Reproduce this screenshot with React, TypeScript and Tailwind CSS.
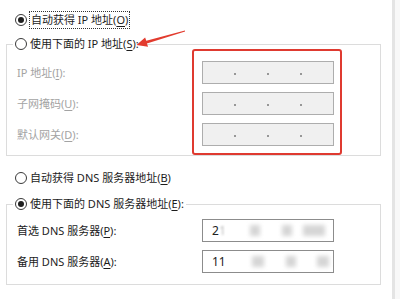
import type { ReactNode } from "react";

function Radio({ checked }: { checked?: boolean }) {
  return (
    <span className="flex h-[12px] w-[12px] shrink-0 items-center justify-center rounded-full border border-[#3a3a3a] bg-white">
      {checked && <span className="h-[6px] w-[6px] rounded-full bg-[#1f1f1f]" />}
    </span>
  );
}

function Key({ k }: { k: string }) {
  return <span className="underline underline-offset-[2px]">{k}</span>;
}

function IpBox() {
  return (
    <div className="flex h-[23px] w-[132px] items-center border border-[#adadad] bg-[#f0f0f0]">
      <span className="flex-1" />
      <span className="mt-[3px] h-[2px] w-[2px] rounded-full bg-[#7a7a7a]" />
      <span className="flex-1" />
      <span className="mt-[3px] h-[2px] w-[2px] rounded-full bg-[#7a7a7a]" />
      <span className="flex-1" />
      <span className="mt-[3px] h-[2px] w-[2px] rounded-full bg-[#7a7a7a]" />
      <span className="flex-1" />
    </div>
  );
}

function DnsBox({
  value,
  ghost,
  blocks,
}: {
  value: string;
  ghost?: string;
  blocks: [number, number][];
}) {
  return (
    <div className="flex h-[23px] w-[132px] items-center border border-[#8c8c8c] bg-white pl-[9px] text-[12px] text-[#222]">
      <span>{value}</span>
      {ghost && <span className="text-[#bbb] blur-[1px]">{ghost}</span>}
      <div className="flex h-[13px] items-center">
        {blocks.map(([ml, w], i) => (
          <span
            key={i}
            className="h-[11px] bg-[#d6d6d6] blur-[2px]"
            style={{ marginLeft: ml, width: w }}
          />
        ))}
      </div>
    </div>
  );
}

function Label({ children }: { children: ReactNode }) {
  return <div className="flex h-[23px] items-center">{children}</div>;
}

export default function App() {
  return (
    <div className="relative flex h-[299px] w-[400px] overflow-hidden bg-white font-['Noto_Sans','Noto_Sans_CJK_SC',sans-serif] text-[11px] leading-[16px] text-[#1c1c1c]">
      <div className="flex w-[392px] flex-col pt-[12px]">
        <div className="flex h-[16px] items-center pl-[15px]">
          <Radio checked />
          <span className="ml-[2px] border border-dotted border-[#333] px-[1px]">
            自动获得 IP 地址(<Key k="O" />)
          </span>
        </div>

        <fieldset className="ml-[6px] mt-[8px] w-[375px] border border-[#dcdcdc]">
          <legend className="ml-[6px] flex h-[16px] items-center px-[2px]">
            <Radio />
            <span className="ml-[3px]">
              使用下面的 IP 地址(<Key k="S" />):
            </span>
          </legend>
          <div className="-mt-[3px] flex">
            <div className="flex w-[185px] flex-col gap-[8px] pl-[10px] pt-[12px] text-[#a3a3a3]">
              <Label>
                IP 地址(<Key k="I" />):
              </Label>
              <Label>
                子网掩码(<Key k="U" />):
              </Label>
              <Label>
                默认网关(<Key k="D" />):
              </Label>
            </div>
            <div className="flex h-[106px] w-[150px] flex-col gap-[8px] rounded-[3px] border-2 border-[#df3a30] pl-[8px] pt-[10px]">
              <IpBox />
              <IpBox />
              <IpBox />
            </div>
          </div>
        </fieldset>

        <div className="mt-[14px] flex h-[16px] items-center pl-[15px]">
          <Radio />
          <span className="ml-[3px]">
            自动获得 DNS 服务器地址(<Key k="B" />)
          </span>
        </div>

        <fieldset className="ml-[6px] mt-[10px] w-[375px] border border-[#dcdcdc]">
          <legend className="ml-[6px] flex h-[16px] items-center px-[2px]">
            <Radio checked />
            <span className="ml-[3px]">
              使用下面的 DNS 服务器地址(<Key k="E" />):
            </span>
          </legend>
          <div className="flex pb-[11px] pt-[7px]">
            <div className="flex w-[195px] flex-col gap-[8px] pl-[10px]">
              <Label>
                首选 DNS 服务器(<Key k="P" />):
              </Label>
              <Label>
                备用 DNS 服务器(<Key k="A" />):
              </Label>
            </div>
            <div className="flex flex-col gap-[8px]">
              <DnsBox value="2" ghost="1" blocks={[[24, 10], [22, 10], [11, 22]]} />
              <DnsBox value="11" blocks={[[26, 12], [22, 10], [21, 12]]} />
            </div>
          </div>
        </fieldset>
      </div>
      <div className="w-[3px] bg-[#e4e4e4]" />
      <div className="flex-1 bg-[#f8f8f8]" />

      <svg
        className="pointer-events-none absolute left-0 top-0"
        width="400"
        height="299"
        viewBox="0 0 400 299"
      >
        <polygon
          points="184.9,30.4 146.3,40.8 145.1,37.5 136.5,45 148.1,46.8 146.9,43.6 185.1,31.6"
          fill="#e23b2e"
        />
      </svg>
    </div>
  );
}
